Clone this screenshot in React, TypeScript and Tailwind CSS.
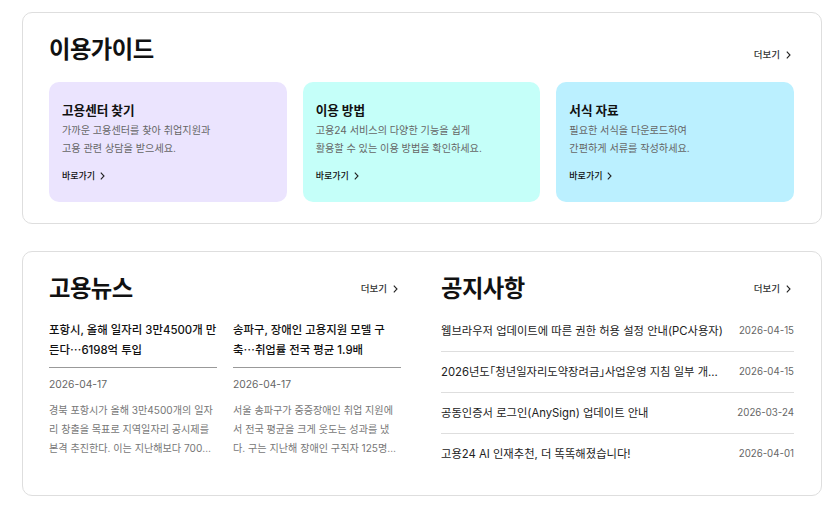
import React from "react";

const FONT = "font-['Inter','Noto_Sans_CJK_KR',sans-serif]";

const guides = [
  { title: "고용센터 찾기", lines: ["가까운 고용센터를 찾아 취업지원과", "고용 관련 상담을 받으세요."], bg: "bg-[#ebe4fe]" },
  { title: "이용 방법", lines: ["고용24 서비스의 다양한 기능을 쉽게", "활용할 수 있는 이용 방법을 확인하세요."], bg: "bg-[#c5fff9]" },
  { title: "서식 자료", lines: ["필요한 서식을 다운로드하여", "간편하게 서류를 작성하세요."], bg: "bg-[#bbf0ff]" },
];

const Dots = () => <span className="font-['Noto_Sans_CJK_KR',sans-serif]">…</span>;

const news = [
  {
    id: "pohang",
    title: <>포항시, 올해 일자리 3만4500개 만든다<Dots />6198억 투입</>,
    date: "2026-04-17",
    body: "경북 포항시가 올해 3만4500개의 일자리 창출을 목표로 지역일자리 공시제를 본격 추진한다. 이는 지난해보다 7000개 늘어난 규모로 알려졌다.",
  },
  {
    id: "songpa",
    title: <>송파구, 장애인 고용지원 모델 구축<Dots />취업률 전국 평균 1.9배</>,
    date: "2026-04-17",
    body: "서울 송파구가 중증장애인 취업 지원에서 전국 평균을 크게 웃도는 성과를 냈다. 구는 지난해 장애인 구직자 125명을 지원했다고 밝혔다.",
  },
];

const Bracket = ({ children }: { children: React.ReactNode }) => (
  <span className="[font-feature-settings:'halt']">{children}</span>
);

const notices = [
  { id: 1, title: <>웹브라우저 업데이트에 따른 권한 허용 설정 안내(PC사용자)</>, date: "2026-04-15" },
  { id: 2, title: <>2026년도<Bracket>「</Bracket>청년일자리도약장려금<Bracket>」</Bracket>사업운영 지침 일부 개정 안내</>, date: "2026-04-15" },
  { id: 3, title: <>공동인증서 로그인(AnySign) 업데이트 안내</>, date: "2026-03-24" },
  { id: 4, title: <>고용24 AI 인재추천, 더 똑똑해졌습니다!</>, date: "2026-04-01" },
];

const Chevron = () => (
  <svg width="5" height="8" viewBox="0 0 5 8" fill="none" className="shrink-0">
    <path d="M0.8 0.6L4 4L0.8 7.4" stroke="#222" strokeWidth="1.1" />
  </svg>
);

const More = () => (
  <a className="mr-[3px] flex items-center gap-[6px] text-[9.5px] font-medium leading-4 text-[#333]">
    더보기 <Chevron />
  </a>
);

const Heading = ({ children }: { children: React.ReactNode }) => (
  <h2 className="text-[23.3px] font-bold leading-9 tracking-[-0.5px] text-[#111]">{children}</h2>
);

export default function App() {
  return (
    <div className={`${FONT} h-[512px] w-[837px] overflow-hidden bg-white pl-[22px] pt-3`}>
      <section className="h-[212px] w-[800px] rounded-[10px] border border-[#dedede] pl-[26px] pr-[27px] pt-[19px]">
        <div className="flex items-center justify-between">
          <Heading>이용가이드</Heading>
          <div className="pt-[9px]"><More /></div>
        </div>
        <div className="mt-[14px] grid grid-cols-3 gap-4">
          {guides.map((g) => (
            <div key={g.title} className={`${g.bg} h-[120px] rounded-[10px] px-[13px] pt-[19px]`}>
              <h3 className="text-[12.6px] font-bold leading-5 text-[#111]">{g.title}</h3>
              {g.lines.map((l) => (
                <p key={l} className="text-[10.15px] leading-[18px] text-[#666]">{l}</p>
              ))}
              <a className="mt-[11px] flex items-center gap-[5px] text-[9px] font-medium leading-4 text-[#111]">
                바로가기 <Chevron />
              </a>
            </div>
          ))}
        </div>
      </section>

      <section className="mt-[27px] flex h-[245px] w-[800px] gap-10 rounded-[10px] border border-[#dedede] pl-[26px] pr-[27px] pt-[19px]">
        <div className="w-[352px]">
          <div className="flex items-center justify-between">
            <Heading>고용뉴스</Heading>
            <More />
          </div>
          <div className="mt-[14px] grid grid-cols-2 gap-4">
            {news.map((n) => (
              <div key={n.id}>
                <h3 className="line-clamp-2 h-[46px] text-[11.4px] font-medium leading-[19px] text-[#111]">{n.title}</h3>
                <div className="border-t border-[#999] pt-[8px] text-[10.3px] leading-4 text-[#666]">{n.date}</div>
                <p className="mt-[9px] line-clamp-3 text-[10.1px] leading-[19px] text-[#777]">{n.body}</p>
              </div>
            ))}
          </div>
        </div>
        <div className="w-[353px]">
          <div className="flex items-center justify-between">
            <Heading>공지사항</Heading>
            <More />
          </div>
          <ul className="mt-[4px]">
            {notices.map((n) => (
              <li key={n.id} className="flex h-[41px] items-center justify-between border-b border-[#dedede] pb-[1px] last:border-transparent">
                <span className="min-w-0 max-w-[284px] truncate text-[11.3px] leading-4 text-[#222]">{n.title}</span>
                <span className="shrink-0 text-[9.7px] leading-4 text-[#666]">{n.date}</span>
              </li>
            ))}
          </ul>
        </div>
      </section>
    </div>
  );
}
